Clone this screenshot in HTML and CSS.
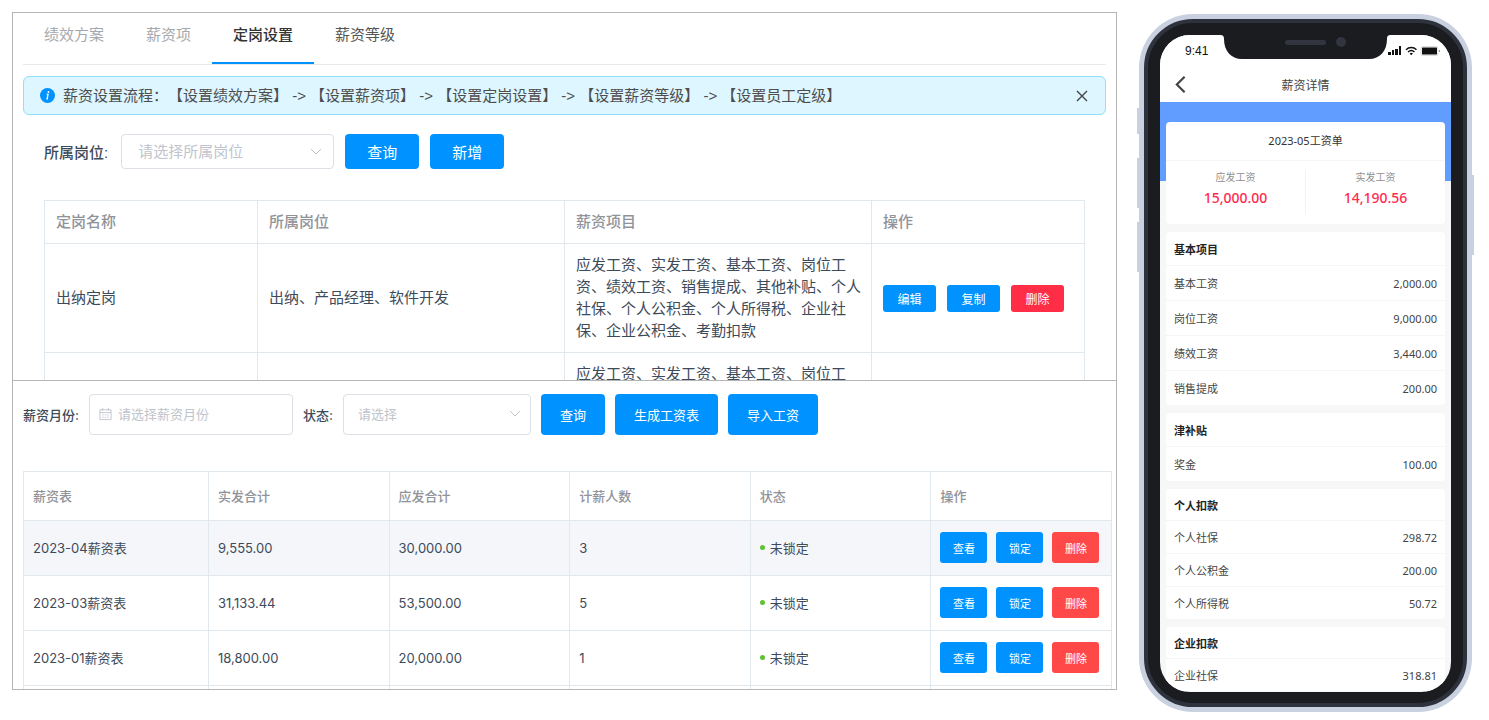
FILE: index.html
```
<!DOCTYPE html>
<html lang="zh-CN">
<head>
    <meta charset="UTF-8">
    <meta name="viewport" content="width=device-width, initial-scale=1.0">
    <title>薪资管理</title>
    <link rel="stylesheet" href="styles.css">
</head>
<body>
    <main class="page">
        <div class="panels">
            <!-- 定岗设置 -->
            <section class="panel panel-post">
                <nav class="tabs">
                    <a href="#" class="tab muted">绩效方案</a>
                    <a href="#" class="tab muted">薪资项</a>
                    <a href="#" class="tab active">定岗设置</a>
                    <a href="#" class="tab">薪资等级</a>
                </nav>

                <div class="alert">
                    <svg class="alert-icon" viewBox="0 0 14 14">
                        <circle cx="7" cy="7" r="7" fill="#0093ff"/>
                        <circle cx="7.9" cy="3.7" r="0.9" fill="#fff"/>
                        <path d="M6.2 5.9h1.3l-0.9 4.3h0.9" fill="none" stroke="#fff" stroke-width="1.2"/>
                    </svg>
                    <p>薪资设置流程：【设置绩效方案】 -&gt; 【设置薪资项】 -&gt; 【设置定岗设置】 -&gt; 【设置薪资等级】 -&gt; 【设置员工定级】</p>
                    <button type="button" class="alert-close" aria-label="关闭">
                        <svg viewBox="0 0 12 12"><path d="M1 1l10 10M11 1L1 11" fill="none" stroke="#444" stroke-width="1.4"/></svg>
                    </button>
                </div>

                <form class="filter">
                    <label for="post">所属岗位:</label>
                    <div class="select">
                        <select id="post">
                            <option>请选择所属岗位</option>
                        </select>
                        <svg viewBox="0 0 12 7"><path d="M1 1l5 5 5-5" fill="none" stroke="#c0c4cc"/></svg>
                    </div>
                    <button type="button" class="btn">查询</button>
                    <button type="button" class="btn">新增</button>
                </form>

                <table class="table post-table">
                    <thead>
                        <tr>
                            <th class="col-side">定岗名称</th>
                            <th>所属岗位</th>
                            <th>薪资项目</th>
                            <th class="col-side">操作</th>
                        </tr>
                    </thead>
                    <tbody>
                        <tr>
                            <td>出纳定岗</td>
                            <td>出纳、产品经理、软件开发</td>
                            <td>应发工资、实发工资、基本工资、岗位工资、绩效工资、销售提成、其他补贴、个人社保、个人公积金、个人所得税、企业社保、企业公积金、考勤扣款</td>
                            <td>
                                <div class="actions">
                                    <button type="button" class="btn-small">编辑</button>
                                    <button type="button" class="btn-small">复制</button>
                                    <button type="button" class="btn-small danger">删除</button>
                                </div>
                            </td>
                        </tr>
                        <tr>
                            <td></td>
                            <td></td>
                            <td>应发工资、实发工资、基本工资、岗位工</td>
                            <td></td>
                        </tr>
                    </tbody>
                </table>
            </section>

            <!-- 工资表 -->
            <section class="panel panel-salary">
                <form class="filter">
                    <label for="month">薪资月份:</label>
                    <div class="date">
                        <svg viewBox="0 0 14 14" fill="none" stroke="#c0c4cc">
                            <path d="M1 2.5h12v10.5H1zM1 5.5h12M4 0.5v3M10 0.5v3"/>
                            <path d="M3.5 8h7M3.5 10.5h7" stroke-dasharray="1.5 1.2"/>
                        </svg>
                        <input type="text" id="month" placeholder="请选择薪资月份">
                    </div>
                    <label for="status">状态:</label>
                    <div class="select">
                        <select id="status">
                            <option>请选择</option>
                        </select>
                        <svg viewBox="0 0 12 7"><path d="M1 1l5 5 5-5" fill="none" stroke="#c0c4cc"/></svg>
                    </div>
                    <button type="button" class="btn">查询</button>
                    <button type="button" class="btn">生成工资表</button>
                    <button type="button" class="btn">导入工资</button>
                </form>

                <table class="table salary-table">
                    <thead>
                        <tr>
                            <th class="col-name">薪资表</th>
                            <th>实发合计</th>
                            <th>应发合计</th>
                            <th>计薪人数</th>
                            <th>状态</th>
                            <th>操作</th>
                        </tr>
                    </thead>
                    <tbody>
                        <tr class="hover">
                            <td>2023-04薪资表</td>
                            <td>9,555.00</td>
                            <td>30,000.00</td>
                            <td>3</td>
                            <td><span class="status">未锁定</span></td>
                            <td>
                                <div class="actions">
                                    <button type="button" class="btn-small">查看</button>
                                    <button type="button" class="btn-small">锁定</button>
                                    <button type="button" class="btn-small danger">删除</button>
                                </div>
                            </td>
                        </tr>
                        <tr>
                            <td>2023-03薪资表</td>
                            <td>31,133.44</td>
                            <td>53,500.00</td>
                            <td>5</td>
                            <td><span class="status">未锁定</span></td>
                            <td>
                                <div class="actions">
                                    <button type="button" class="btn-small">查看</button>
                                    <button type="button" class="btn-small">锁定</button>
                                    <button type="button" class="btn-small danger">删除</button>
                                </div>
                            </td>
                        </tr>
                        <tr>
                            <td>2023-01薪资表</td>
                            <td>18,800.00</td>
                            <td>20,000.00</td>
                            <td>1</td>
                            <td><span class="status">未锁定</span></td>
                            <td>
                                <div class="actions">
                                    <button type="button" class="btn-small">查看</button>
                                    <button type="button" class="btn-small">锁定</button>
                                    <button type="button" class="btn-small danger">删除</button>
                                </div>
                            </td>
                        </tr>
                        <tr>
                            <td></td>
                            <td></td>
                            <td></td>
                            <td></td>
                            <td></td>
                            <td></td>
                        </tr>
                    </tbody>
                </table>
            </section>
        </div>

        <!-- 手机端 -->
        <aside class="phone">
            <span class="key key-mute"></span>
            <span class="key key-up"></span>
            <span class="key key-down"></span>
            <span class="key key-power"></span>
            <div class="phone-body">
                <div class="screen">
                    <svg class="notch" viewBox="0 0 171 24">
                        <path d="M0 0C3 0 4 1 4 4C4 16 11 24 22 24H149C160 24 167 16 167 4C167 1 168 0 171 0Z" fill="#1a1c20"/>
                        <rect x="65" y="5" width="41" height="5" rx="2.5" fill="#32343f"/>
                        <circle cx="121" cy="7" r="5" fill="#32343f"/>
                    </svg>
                    <div class="status-bar">
                        <span>9:41</span>
                        <svg viewBox="0 0 52 10" fill="#111">
                            <rect x="0" y="6" width="3" height="3"/>
                            <rect x="4" y="4" width="2" height="5"/>
                            <rect x="7" y="3" width="3" height="6"/>
                            <rect x="11" y="0" width="2" height="9"/>
                            <path d="M18 3.8c3-3 7.6-3 10.5 0M20 6c2-1.9 4.6-1.9 6.5 0" fill="none" stroke="#111" stroke-width="1.4"/>
                            <path d="M21.6 7.5c1-.9 2.3-.9 3.3 0L23.2 9.3z"/>
                            <rect x="33" y="0.5" width="17" height="9" rx="1.5" fill="#fff" stroke="#bbb" stroke-width="0.5"/>
                            <rect x="34" y="1.5" width="15" height="7" rx="0.5"/>
                            <rect x="51" y="4" width="1" height="2" fill="#999"/>
                        </svg>
                    </div>
                    <header class="app-bar">
                        <button type="button" class="back" aria-label="返回">
                            <svg viewBox="0 0 12 20"><path d="M10.5 1.5L2 10l8.5 8.5" fill="none" stroke="#444" stroke-width="2.4"/></svg>
                        </button>
                        <h1>薪资详情</h1>
                    </header>

                    <div class="slip">
                        <div class="card summary">
                            <h2>2023-05工资单</h2>
                            <dl>
                                <div>
                                    <dt>应发工资</dt>
                                    <dd>15,000.00</dd>
                                </div>
                                <div>
                                    <dt>实发工资</dt>
                                    <dd>14,190.56</dd>
                                </div>
                            </dl>
                        </div>

                        <div class="card items">
                            <h3>基本项目</h3>
                            <p><span>基本工资</span><span>2,000.00</span></p>
                            <p><span>岗位工资</span><span>9,000.00</span></p>
                            <p><span>绩效工资</span><span>3,440.00</span></p>
                            <p><span>销售提成</span><span>200.00</span></p>
                        </div>

                        <div class="card items">
                            <h3>津补贴</h3>
                            <p><span>奖金</span><span>100.00</span></p>
                        </div>

                        <div class="card items compact">
                            <h3>个人扣款</h3>
                            <p><span>个人社保</span><span>298.72</span></p>
                            <p><span>个人公积金</span><span>200.00</span></p>
                            <p><span>个人所得税</span><span>50.72</span></p>
                        </div>

                        <div class="card items compact">
                            <h3>企业扣款</h3>
                            <p><span>企业社保</span><span>318.81</span></p>
                        </div>
                    </div>
                </div>
            </div>
        </aside>
    </main>
</body>
</html>
```
FILE: styles.css
```
* {
    box-sizing: border-box;
}

body {
    margin: 0;
    background-color: #fff;
    color: #3d4a5a;
    font-family: "Liberation Sans", "Noto Sans CJK SC", sans-serif;
    font-size: 15px;
}

h1, h2, h3, p, dl, dd {
    margin: 0;
}

button, input, select {
    font-family: inherit;
}

button {
    border: none;
    padding: 0;
    cursor: pointer;
}

svg {
    display: block;
}

.page {
    display: grid;
    grid-template-columns: minmax(0, 1fr) 333px;
    gap: 22px;
    height: 100vh;
    padding: 12px 17px 8px 12px;
}

/* left side */
.panels {
    display: grid;
    grid-template-rows: 19fr 16fr;
    margin-bottom: 22px;
    border: 1px solid #b5b5b5;
    min-height: 0;
}

.panel {
    overflow: hidden;
    min-height: 0;
}

.panel-post {
    padding: 0 10px;
}

.panel-salary {
    border-top: 1px solid #b5b5b5;
    padding: 13px 4px 0 10px;
    font-family: Inter, "Noto Sans CJK SC", sans-serif;
    font-size: 13px;
}

.tabs {
    display: flex;
    height: 52px;
    border-bottom: 1px solid #e8eaec;
}

.tab {
    padding: 0 21px;
    line-height: 44px;
    height: 51px;
    color: #555;
    text-decoration: none;
}

.tab.muted {
    color: #a5a8ad;
}

.tab.active {
    color: #333;
    font-weight: 500;
    border-bottom: 2px solid #0093ff;
}

.alert {
    display: flex;
    align-items: center;
    gap: 8px;
    height: 39px;
    margin-top: 11px;
    padding: 0 17px 0 16px;
    border: 1px solid #8fdfff;
    border-radius: 6px;
    background-color: #ddf6ff;
    color: #4d4d4d;
}

.alert p {
    flex: 1;
    line-height: 36px;
    white-space: nowrap;
    text-spacing-trim: space-all;
}

.alert-icon {
    width: 15px;
    height: 15px;
}

.alert-close {
    background: none;
}

.alert-close svg {
    width: 12px;
    height: 12px;
}

.filter {
    display: flex;
    align-items: center;
}

.filter label {
    font-weight: 500;
}

.panel-post .filter {
    gap: 11px;
    margin: 19px 21px 0;
}

.panel-post .filter label {
    margin-right: 2px;
}

.panel-salary .filter {
    gap: 10px;
}

.select {
    position: relative;
    width: 213px;
}

.panel-salary .select {
    width: 188px;
}

.select select,
.date input {
    display: block;
    width: 100%;
    height: 35px;
    border: 1px solid #dcdfe6;
    border-radius: 4px;
    background-color: #fff;
    color: #c0c4cc;
    font-size: 15px;
}

.select select {
    appearance: none;
    padding: 0 30px 0 16px;
}

.select svg {
    position: absolute;
    right: 12px;
    top: 50%;
    width: 12px;
    height: 7px;
    margin-top: -4px;
    pointer-events: none;
}

.panel-salary .select select,
.panel-salary .date input {
    height: 41px;
    font-size: 13px;
}

.panel-salary .select select {
    padding-left: 14px;
}

.panel-salary .select svg {
    right: 10px;
}

.date {
    position: relative;
    width: 204px;
}

.date input {
    padding: 0 10px 0 28px;
}

.date input::placeholder {
    color: #c0c4cc;
}

.date svg {
    position: absolute;
    left: 10px;
    top: 50%;
    width: 13px;
    height: 14px;
    margin-top: -7px;
}

.btn {
    height: 35px;
    padding: 0 22px;
    border-radius: 4px;
    background-color: #0093ff;
    color: #fff;
    font-size: 15px;
}

.panel-salary .btn {
    height: 41px;
    padding: 0 19px;
    font-size: 13px;
}

.table {
    border-collapse: collapse;
    table-layout: fixed;
}

.table th,
.table td {
    border: 1px solid #e0e8ee;
    text-align: left;
    line-height: 22px;
}

.table th {
    color: #909399;
    font-weight: 500;
}

.post-table {
    width: calc(100% - 42px);
    margin: 31px 21px 0;
}

.post-table th,
.post-table td {
    padding: 10px 10px 10px 11px;
}

.post-table .col-side {
    width: 213px;
}

.salary-table {
    width: 100%;
    margin-top: 36px;
}

.salary-table th,
.salary-table td {
    height: 55px;
    padding: 0 9px;
}

.salary-table th {
    height: 49px;
}

.salary-table .col-name {
    width: 17%;
}

.salary-table .hover {
    background-color: #f4f6fa;
}

.actions {
    display: flex;
    gap: 11px;
}

.btn-small {
    width: 53px;
    height: 27px;
    border-radius: 3px;
    background-color: #0093ff;
    color: #fff;
    font-size: 12px;
    white-space: nowrap;
}

.btn-small.danger {
    background-color: #ff2d46;
}

.salary-table .actions {
    gap: 9px;
}

.salary-table .btn-small {
    width: 47px;
    height: 31px;
    font-size: 11px;
}

.salary-table .btn-small.danger {
    background-color: #ff4949;
}

.status {
    display: flex;
    align-items: center;
    gap: 5px;
}

.status::before {
    content: "";
    width: 5px;
    height: 5px;
    border-radius: 50%;
    background-color: #5fc133;
}

/* phone */
.phone {
    position: relative;
    margin-top: 2px;
    padding: 5px;
    border-radius: 54px;
    background-color: #c9d1e0;
    min-height: 0;
    font-family: "Noto Sans", "Noto Sans CJK SC", sans-serif;
    font-size: 11px;
    color: #444;
}

.phone-body {
    height: 100%;
    padding: 12px 12px 11px;
    border: 4px solid #2e323d;
    border-radius: 49px;
    background-color: #1a1c20;
}

.key {
    position: absolute;
    left: -2px;
    width: 3px;
    height: 50px;
    background-color: #c9d1e0;
}

.key-mute {
    top: 94px;
    height: 26px;
}

.key-up {
    top: 144px;
}

.key-down {
    top: 208px;
}

.key-power {
    left: auto;
    right: -2px;
    top: 161px;
    height: 80px;
}

.screen {
    position: relative;
    height: 100%;
    overflow: hidden;
    border-radius: 30px;
    background-color: #f7f7f7;
}

.notch {
    position: absolute;
    top: 0;
    left: 60px;
    width: 171px;
    height: 24px;
}

.status-bar {
    display: flex;
    justify-content: space-between;
    align-items: center;
    height: 32px;
    padding: 0 11px 0 25px;
    background-color: #fff;
    color: #111;
    font-family: "Liberation Sans", sans-serif;
    font-size: 12px;
}

.status-bar svg {
    width: 52px;
    height: 10px;
}

.app-bar {
    display: grid;
    grid-template-columns: 40px 1fr 40px;
    align-items: center;
    height: 35px;
    background-color: #fff;
}

.app-bar h1 {
    font-size: 12px;
    font-weight: 400;
    text-align: center;
}

.back {
    padding-left: 15px;
    background: none;
}

.back svg {
    width: 11px;
    height: 19px;
}

.slip {
    display: flex;
    flex-direction: column;
    gap: 8px;
    padding: 20px 6px 0;
    background: linear-gradient(#619dff, #619dff) no-repeat 0 0 / 100% 79px;
}

.card {
    border-radius: 4px;
    background-color: #fff;
}

.summary {
    height: 102px;
    text-align: center;
}

.summary h2 {
    height: 39px;
    border-bottom: 1px solid #f5f5f5;
    font-size: 11px;
    font-weight: 400;
    line-height: 38px;
    color: #333;
}

.summary dl {
    display: flex;
    padding-top: 9px;
}

.summary dl div {
    flex: 1;
    height: 44px;
}

.summary dl div + div {
    border-left: 1px solid #f3f3f3;
}

.summary dt {
    font-size: 10px;
    line-height: 14px;
    color: #909090;
}

.summary dd {
    font-size: 14px;
    font-weight: 500;
    line-height: 28px;
    color: #ff2a50;
}

.items h3,
.items p {
    display: flex;
    justify-content: space-between;
    align-items: center;
    height: 35px;
    padding: 0 8px;
}

.items h3 {
    height: 33px;
    font-size: 11px;
    font-weight: 700;
    color: #222;
}

.items p {
    border-top: 1px solid #f5f5f5;
}

.compact h3 {
    height: 31px;
}

.compact p {
    height: 33px;
}
```
